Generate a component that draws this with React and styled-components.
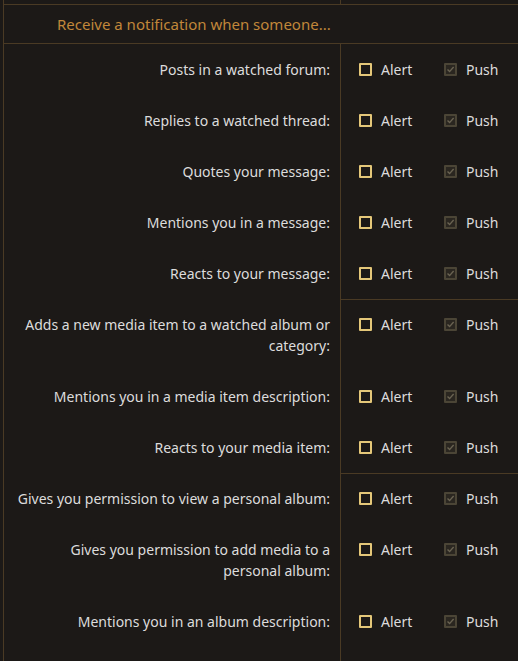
import React from "react";
import styled, { createGlobalStyle } from "styled-components";

const GlobalStyle = createGlobalStyle`
  html, body {
    margin: 0;
    padding: 0;
    background: #1c1917;
  }
  body {
    font-family: "Noto Sans", "Open Sans", sans-serif;
  }
`;

const Page = styled.div`
  width: 515px;
  height: 661px;
  overflow: hidden;
  background: #1c1917;
  border-left: 1px solid #4a3a24;
  margin-left: 3px;
  box-sizing: border-box;
  display: flex;
  flex-direction: column;
`;

const TopStrip = styled.div`
  display: grid;
  grid-template-columns: 336px 1fr;
  height: 4px;
  flex-shrink: 0;
  border-bottom: 1px solid #4a3a24;
`;

const StripCell = styled.div`
  border-left: ${(p) => (p.$divider ? "1px solid #4a3a24" : "none")};
`;

const Header = styled.div`
  height: 38px;
  flex-shrink: 0;
  display: flex;
  align-items: center;
  padding-left: 53px;
  border-bottom: 1px solid #4a3a24;
  color: #c1873a;
  font-size: 15px;
`;

const Row = styled.div`
  display: grid;
  grid-template-columns: 336px 1fr;
  flex-shrink: 0;

  &:last-child {
    flex: 1;
  }
`;

const Label = styled.div`
  padding: 15px 10px 15px 8px;
  text-align: right;
  color: #dcdcdc;
  font-size: 14px;
  line-height: 21px;
`;

const Controls = styled.div`
  border-left: 1px solid #4a3a24;
  border-top: ${(p) => (p.$groupStart ? "1px solid #4a3a24" : "none")};
  padding: ${(p) => (p.$groupStart ? "14px" : "15px")} 0 15px 18px;
  display: flex;
  align-items: flex-start;
`;

const Option = styled.label`
  display: flex;
  align-items: center;
  height: 21px;
  width: 85px;
  color: #dcdcdc;
  font-size: 14px;
`;

const Box = styled.span`
  width: 13px;
  height: 13px;
  box-sizing: border-box;
  margin-right: 9px;
  border: 2px solid ${(p) => (p.$disabled ? "#4b4536" : "#e4c779")};
  border-radius: 1px;
  display: flex;
  align-items: center;
  justify-content: center;
  background: ${(p) => (p.$disabled ? "#2a2620" : "transparent")};
`;

const Check = () => (
  <svg width="9" height="9" viewBox="0 0 9 9">
    <path d="M1.5 4.6 L3.6 6.6 L7.6 2" fill="none" stroke="#6a6352" strokeWidth="1.4" />
  </svg>
);

const groups = [
  [
    "Posts in a watched forum:",
    "Replies to a watched thread:",
    "Quotes your message:",
    "Mentions you in a message:",
    "Reacts to your message:",
  ],
  [
    "Adds a new media item to a watched album or category:",
    "Mentions you in a media item description:",
    "Reacts to your media item:",
  ],
  [
    "Gives you permission to view a personal album:",
    "Gives you permission to add media to a personal album:",
    "Mentions you in an album description:",
  ],
];

export default function App() {
  return (
    <Page>
      <GlobalStyle />
      <TopStrip>
        <StripCell />
        <StripCell $divider />
      </TopStrip>
      <Header>Receive a notification when someone...</Header>
      {groups.map((g, gi) =>
        g.map((text, i) => (
          <Row key={gi + "-" + i}>
            <Label>{text}</Label>
            <Controls $groupStart={gi > 0 && i === 0}>
              <Option>
                <Box />
                Alert
              </Option>
              <Option>
                <Box $disabled>
                  <Check />
                </Box>
                Push
              </Option>
            </Controls>
          </Row>
        ))
      )}
    </Page>
  );
}
